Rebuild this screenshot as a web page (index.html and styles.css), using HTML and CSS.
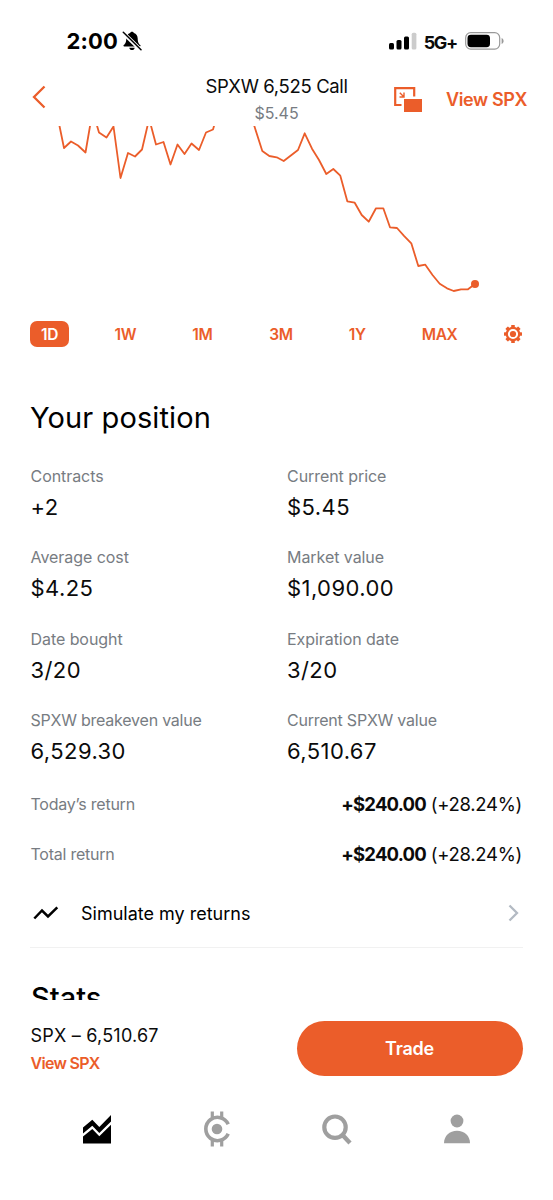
FILE: index.html
```html
<!DOCTYPE html>
<html lang="en">
<head>
<meta charset="utf-8">
<title>SPXW 6,525 Call</title>
<link rel="stylesheet" href="styles.css">
</head>
<body>
<div class="screen">
  <div class="status">
    <div class="status-left">
      <span class="time">2:00</span>
      <svg class="bell" width="20" height="20" viewBox="0 0 20 20"><path d="M10 .7c1 0 1.700.6 1.900 1.400 2.400.8 3.700 2.800 3.800 5.300.1 4 1 5.200 2.600 6.700.5.6.2 1.300-.6 1.300H2.300c-.8 0-1.100-.7-.6-1.300 1.600-1.500 2.500-2.700 2.600-6.700.1-2.500 1.400-4.500 3.800-5.300C8.300 1.300 9 .7 10 .7z"/><path d="M7.300 16.700h5.400c-.2 1.600-1.300 2.400-2.700 2.400s-2.500-.8-2.700-2.400z"/><path d="M.8 1.500l18 17.500" stroke="#fff" stroke-width="4"/><path d="M1.300 1.300l17.700 17.500" stroke="#000" stroke-width="1.500" stroke-linecap="round"/></svg>
    </div>
    <div class="status-right">
      <svg width="28" height="18" viewBox="0 0 28 18"><rect x="0" y="11" width="5" height="6.500" rx="1.500"/><rect x="7.500" y="8" width="5" height="9.500" rx="1.500"/><rect x="15" y="4.500" width="5" height="13" rx="1.500"/><rect x="22.700" y=".7" width="4.700" height="16.800" rx="1.500" fill="#ccc"/></svg>
      <span class="net">5G+</span>
      <svg width="39" height="18" viewBox="0 0 39 18"><rect x=".7" y=".7" width="34" height="16.400" rx="5" fill="none" stroke="#999" stroke-width="1.200"/><rect x="2.500" y="2.700" width="22.500" height="12.500" rx="3.400"/><path d="M36.600 6v6c1.300-.5 2-1.600 2-3s-.7-2.500-2-3z" fill="#999"/></svg>
    </div>
  </div>
  <div class="nav">
    <svg class="back" width="14" height="24" viewBox="0 0 14 24"><path d="M12.500 1.500L2 12l10.500 10.500" fill="none" stroke="#eb5d2a" stroke-width="2.300"/></svg>
    <div class="nav-title"><div class="title">SPXW 6,525 Call</div><div class="subtitle">$5.45</div></div>
    <div class="nav-right">
      <svg width="28" height="26" viewBox="0 0 28 26"><path d="M7.500 18H1.200V1.200h19V9.500" fill="none" stroke="#eb5d2a" stroke-width="2.200"/><path d="M10 12h18v13H10z" fill="#eb5d2a"/><path d="M5.800 5.800l3.700 3.700M10 5.600V10H5.500" fill="none" stroke="#eb5d2a" stroke-width="1.400"/></svg>
      <span class="link-top">View SPX</span>
    </div>
  </div>
  <svg class="chart" width="553" height="174" viewBox="0 126 553 174"><g fill="none" stroke="#eb5d2a" stroke-width="1.800" stroke-linejoin="round"><path d="M59.300 125L64 148l7-6.500 7 4 7.500 7L90.200 125"/><path d="M96.800 125l2.200 7.500 7.500 5 7-11 7 51.500 7.500-25 7 3.500 7-7L147.700 125"/><path d="M150.800 125l5.200 19.500 7.500-2.500 7 22.500 7-20 7 9.500 7-10.500 7.500 6.500 7-17.500 7-3 1.300-4.500"/><path d="M254 125l8.300 26 7 5 7.400 1.300 7 3.700L298 150l6.700-16.700 7.300 15.400 7 11.300 7.300 14 7-5 7 6.700 7 25.600 7.400 1.400 7 12.300 7 6.700 7.300-13.400h7.300l6.700 19 7 .7 7 7.900 7.300 7.400 7 22.700 7-1.300 7.200 10.300 7.200 8.700 7.300 4.600 6.700 2.700 7.300-1.700h7l7-5.300"/></g><circle cx="475" cy="284" r="4" fill="#eb5d2a"/></svg>
  <div class="ranges">
    <span class="range active">1D</span><span class="range r-w">1W</span><span class="range r-m">1M</span><span class="range r-3m">3M</span><span class="range r-y">1Y</span><span class="range r-max">MAX</span>
    <svg class="gear" width="18" height="18" viewBox="-9 -9 18 18"><g fill="#eb5d2a"><g id="teeth"><rect x="-1.800" y="-9" width="3.600" height="18" rx=".5"/><rect x="-9" y="-1.800" width="18" height="3.600" rx=".5"/></g><use href="#teeth" transform="rotate(45)"/></g><circle r="6.200" fill="#fff" stroke="#eb5d2a" stroke-width="2.200"/><circle r="3.100" fill="#eb5d2a"/></svg>
  </div>
  <h1 class="heading">Your position</h1>
  <div class="grid">
    <div class="cell"><div class="label">Contracts</div><div class="value">+2</div></div>
    <div class="cell"><div class="label">Current price</div><div class="value">$5.45</div></div>
    <div class="cell"><div class="label">Average cost</div><div class="value">$4.25</div></div>
    <div class="cell"><div class="label">Market value</div><div class="value">$1,090.00</div></div>
    <div class="cell"><div class="label">Date bought</div><div class="value">3/20</div></div>
    <div class="cell"><div class="label">Expiration date</div><div class="value">3/20</div></div>
    <div class="cell"><div class="label tight">SPXW breakeven value</div><div class="value">6,529.30</div></div>
    <div class="cell"><div class="label tight">Current SPXW value</div><div class="value">6,510.67</div></div>
  </div>
  <div class="return"><span class="label tight">Today’s return</span><span class="amount"><b>+$240.00</b> (+28.24%)</span></div>
  <div class="return"><span class="label tight">Total return</span><span class="amount"><b>+$240.00</b> (+28.24%)</span></div>
  <div class="simulate">
    <svg width="26" height="14" viewBox="0 0 26 14"><path d="M1.300 12.500L9 4.500l6 6L24.300 1.300" fill="none" stroke="#000" stroke-width="2.500"/></svg>
    <span class="sim-text">Simulate my returns</span>
    <svg class="chev" width="11" height="18" viewBox="0 0 11 18"><path d="M1.500 1.500L9 9l-7.500 7.500" fill="none" stroke="#b3bac3" stroke-width="2.300"/></svg>
  </div>
  <div class="stats"><h2 class="heading2">Stats</h2></div>
  <div class="trade-bar">
    <div class="quote-block"><div class="quote">SPX – 6,510.67</div><div class="link-bottom">View SPX</div></div>
    <div class="trade">Trade</div>
  </div>
  <div class="tabs">
    <div class="tab"><svg width="28" height="29" viewBox="0 0 28 29"><path d="M0 12.500L9.300 4.700l7 7.300L28 0v6.500L16.300 18 9.300 10.800 0 18.500zM0 21.500l9.300-7.500 7 7.300L28 9.800V28.500H0z"/></svg></div>
    <div class="tab"><svg width="28" height="36" viewBox="0 0 28 36"><g fill="none" stroke="#9f9f9f"><path d="M25.200 13.200A11.700 11.700 0 1 0 25.200 22.800" stroke-width="3.600"/><path d="M9.300 .5v7M18.700 .5v7M9.300 28.500v7M18.700 28.500v7" stroke-width="3.200"/></g><circle cx="14" cy="18" r="5.300" fill="#9f9f9f"/></svg></div>
    <div class="tab"><svg width="30" height="31" viewBox="0 0 30 31"><g fill="none" stroke="#9f9f9f"><circle cx="13" cy="13.200" r="10.700" stroke-width="4.200"/><path d="M20.500 21l7.500 8" stroke-width="4.400"/></g></svg></div>
    <div class="tab"><svg width="26" height="30" viewBox="0 0 26 30"><g fill="#9f9f9f"><circle cx="13" cy="7" r="6.400"/><path d="M0 29.300c0-7.300 5.500-12.500 13-12.500s13 5.200 13 12.500z"/></g></svg></div>
  </div>
</div>
</body>
</html>
```

FILE: styles.css
```css
* { box-sizing: border-box; }
body { margin: 0; background: #fff; color: #0b0b0b; font-family: Inter, "Liberation Sans", sans-serif; }
svg { display: block; flex: none; }
.screen { width: 553px; height: 1200px; overflow: hidden; display: flex; flex-direction: column; }
.screen > * { flex: none; }
.status { height: 72px; padding: 10px 49px 0 66.500px; display: flex; justify-content: space-between; align-items: center; }
.status-left, .status-right { display: flex; align-items: center; }
.time { font-size: 22px; font-weight: 750; letter-spacing: .15px; color: #000; }
.bell { margin-left: 4.500px; }
.net { font-size: 18px; font-weight: 650; letter-spacing: -1.300px; margin: 2px 8px 0 7px; }
.nav { height: 54px; padding: 0 26px 0 32px; display: grid; grid-template-columns: 107px 1fr 113px; }
.back { margin-top: 13px; }
.nav-title { text-align: center; white-space: nowrap; padding-top: 1px; }
.title { font-size: 18.500px; line-height: 26px; letter-spacing: -.35px; }
.subtitle { font-size: 16px; line-height: 28px; color: #777c82; }
.nav-right { display: flex; justify-content: flex-end; align-items: center; white-space: nowrap; gap: 24px; }
.link-top { font-size: 18px; font-weight: 600; letter-spacing: -.4px; color: #eb5d2a; }
.chart { width: 553px; height: 174px; }
.ranges { height: 68px; padding: 0 31px 0 30px; display: flex; align-items: center; color: #eb5d2a; }
.range { font-size: 15.500px; font-weight: 600; line-height: 25px; padding-top: 1px; letter-spacing: -.35px; }
.range.active { width: 39px; text-align: center; background: #eb5d2a; color: #fff; border-radius: 7px; }
.r-w { margin-left: 45.500px; }
.r-m { margin-left: 56px; }
.r-3m { margin-left: 57px; }
.r-y { margin-left: 56px; }
.r-max { margin-left: 56px; }
.gear { margin-left: auto; }
.heading { margin: 30px 30px 0; font-size: 29px; line-height: 40px; font-weight: 430; letter-spacing: .1px; color: #000; }
.grid { margin: 25.500px 0 0 30.500px; display: grid; grid-template-columns: 256.500px 1fr; grid-auto-rows: 81.500px; }
.label { font-size: 16px; line-height: 24px; letter-spacing: -.06px; color: #777c82; }
.label.tight { letter-spacing: -.23px; }
.value { font-size: 22px; line-height: 30px; margin-top: 4px; letter-spacing: .42px; }
.return { height: 50px; padding: 0 31px 0 30.500px; display: flex; justify-content: space-between; align-items: center; }
.grid + .return { margin-top: -10.500px; }
.amount { font-size: 18.500px; letter-spacing: -.3px; }
.amount b { font-weight: 700; letter-spacing: -.8px; }
.simulate { margin: 0 30px; height: 69px; border-bottom: 1px solid #f1f1f1; display: flex; align-items: center; padding: 0 4px 0 3px; }
.sim-text { font-size: 18px; margin-left: 22px; color: #000; }
.chev { margin-left: auto; }
.stats { height: 52px; overflow: hidden; padding: 30px 31px 0; }
.heading2 { margin: 0; font-size: 29px; line-height: 40px; font-weight: 500; color: #000; }
.trade-bar { height: 96px; padding: 0 30.500px; display: flex; justify-content: space-between; align-items: center; }
.quote-block { padding-top: 2px; }
.quote { font-size: 18px; line-height: 28px; letter-spacing: .22px; }
.link-bottom { font-size: 16px; line-height: 26px; font-weight: 600; letter-spacing: -.7px; color: #eb5d2a; }
.trade { width: 226px; height: 55px; border-radius: 28px; background: #eb5d2a; color: #fff; font-size: 18px; font-weight: 600; letter-spacing: -.2px; display: flex; align-items: center; justify-content: center; }
.tabs { height: 66px; padding: 0 37px; display: grid; grid-template-columns: repeat(4, 120px); align-items: center; }
.tab { display: flex; justify-content: center; }
```
